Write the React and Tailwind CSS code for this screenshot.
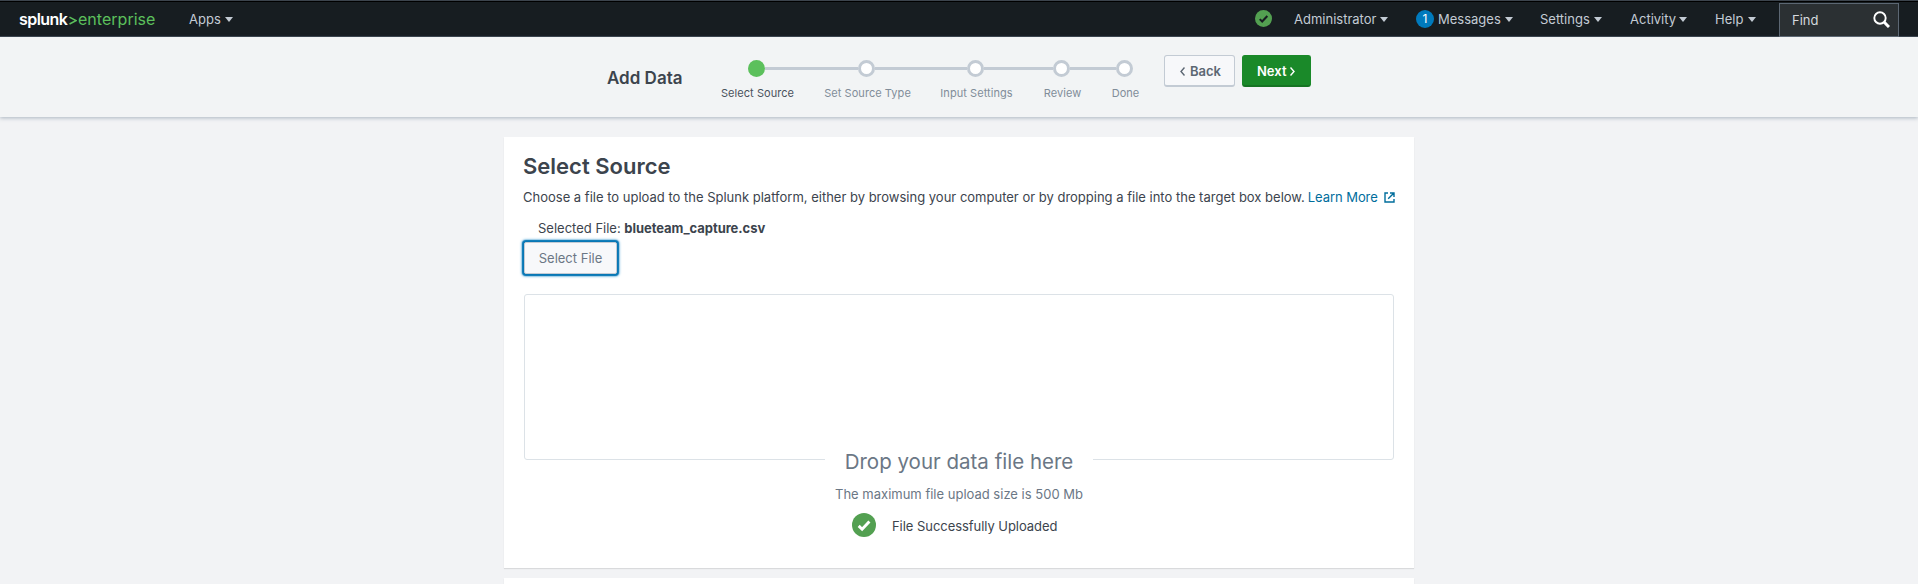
function Caret() {
  return (
    <svg className="mt-[-1px] h-[5px] w-[8px] shrink-0" viewBox="0 0 8 5" fill="currentColor">
      <path d="M0 0h8L4 5z" />
    </svg>
  );
}

function NavItem({ label, className = "" }) {
  return (
    <div className={`flex items-center justify-between pt-[2px] ${className}`}>
      <span>{label}</span>
      <Caret />
    </div>
  );
}

function CheckCircle({ className, check }) {
  return (
    <svg className={`shrink-0 ${className}`} viewBox="0 0 24 24">
      <circle cx="12" cy="12" r="12" fill="#53a051" />
      <path d="M6.7 12.9l3.4 3.3L17.4 8.4" fill="none" stroke={check} strokeWidth="2.9" />
    </svg>
  );
}

function Step({ label, className, active = false }) {
  return (
    <div className={`flex flex-col items-center ${className}`}>
      <div
        className={`size-[17px] rounded-full ${
          active ? "bg-[#5cc05c]" : "border-[3px] border-[#c3cbd4] bg-white"
        }`}
      />
      <div
        className={`mt-[7px] pl-[2px] text-[11px] leading-[18px] tracking-[0.06px] whitespace-nowrap ${
          active ? "text-[#4a525c]" : "text-[#818d99]"
        }`}
      >
        {label}
      </div>
    </div>
  );
}

function Connector({ className }) {
  return <div className={`mt-[7px] h-[3px] shrink-0 bg-[#c3cbd4] ${className}`} />;
}

function TopBar() {
  return (
    <header className="flex h-[37px] border-t border-b border-t-[#3c444d] border-b-[#3c444d] bg-[#171d21] pl-[19px] text-[13px] text-[#c3cbd4] shadow-[inset_0_1px_0_#000]">
      <div className="flex items-center leading-[20px]">
        <span className="w-[50px] text-[16px] font-semibold tracking-[-0.55px] text-white">splunk</span>
        <svg className="mt-[3px] h-[9px] w-[8px]" viewBox="0 0 8 9" fill="none">
          <path d="M0.5 1.2L7 4.6 0.5 8" stroke="#5cc05c" strokeWidth="1.5" />
        </svg>
        <span className="ml-[1px] w-[77px] text-[16px] tracking-[0.02px] text-[#5cc05c]">enterprise</span>
      </div>
      <NavItem label="Apps" className="ml-[34px] w-[44px]" />
      <div className="ml-auto flex items-center">
        <CheckCircle className="mr-[22px] size-[17px]" check="#171d21" />
        <NavItem label="Administrator" className="w-[94px]" />
        <div className="ml-[28px] flex size-[18px] items-center justify-center rounded-full bg-[#007abd] text-[12px] text-white">
          1
        </div>
        <NavItem label="Messages" className="ml-[4px] w-[75px]" />
        <NavItem label="Settings" className="ml-[27px] w-[62px]" />
        <NavItem label="Activity" className="ml-[28px] w-[57px]" />
        <NavItem label="Help" className="ml-[28px] w-[41px]" />
        <div className="mt-[2px] ml-[23px] flex h-[34px] w-[120px] items-center justify-between border border-[#5c6773] bg-[#2b3033] pr-[8px] pl-[12px] text-[#d5dade]">
          <span className="mt-[2px]">Find</span>
          <svg className="size-[17px]" viewBox="0 0 17 17" fill="none" stroke="#fff">
            <circle cx="7" cy="7" r="5.7" strokeWidth="1.9" />
            <path d="M11 11l5 5" strokeWidth="3" />
          </svg>
        </div>
        <div className="w-[19px]" />
      </div>
    </header>
  );
}

function WizardBar() {
  return (
    <div className="flex h-[80px] bg-[#f2f4f5] pl-[607px] shadow-[0_1px_4px_rgba(60,85,110,0.4)]">
      <h1 className="mt-[28px] w-[112px] text-[17px] leading-[26px] font-semibold text-[#3c444d]">Add Data</h1>
      <div className="mt-[23px] flex items-start">
        <Step label="Select Source" className="-mr-[29px] w-[75px]" active />
        <Connector className="w-[93px]" />
        <Step label="Set Source Type" className="-mx-[36px] w-[89px]" />
        <Connector className="w-[92px]" />
        <Step label="Input Settings" className="-mx-[29px] w-[75px]" />
        <Connector className="w-[69px]" />
        <Step label="Review" className="-mx-[13px] w-[43px]" />
        <Connector className="w-[46px]" />
        <Step label="Done" className="-ml-[8px] w-[33px]" />
      </div>
      <div className="mt-[18px] ml-[23px] flex h-[32px] gap-[7px] text-[13px] font-semibold">
        <button className="flex w-[71px] items-center rounded-[3px] border border-b-2 border-[#c3cbd4] bg-[#f7f8fa] pt-[2px] pl-[15px] text-[#5c6773]">
          <svg className="mr-[5px] h-[9px] w-[5px]" viewBox="0 0 5 9" fill="none" stroke="currentColor" strokeWidth="1.4">
            <path d="M4.5 0.5L1 4.5l3.5 4" />
          </svg>
          Back
        </button>
        <button className="flex w-[69px] items-center rounded-[3px] border border-b-2 border-[#1a8929] border-b-[#167423] bg-[#1a8929] pt-[2px] pl-[14px] text-white">
          Next
          <svg className="ml-[4px] h-[9px] w-[5px]" viewBox="0 0 5 9" fill="none" stroke="currentColor" strokeWidth="1.4">
            <path d="M0.5 0.5L4 4.5l-3.5 4" />
          </svg>
        </button>
      </div>
    </div>
  );
}

function SourcePanel() {
  return (
    <main className="mx-auto mt-[20px] h-[431px] w-[910px] bg-white px-[20px] pt-[14px] text-[13px] leading-[20px] text-[#3c444d] shadow-[0_1px_1px_rgba(0,0,0,0.1)]">
      <h2 className="-ml-px text-[22px] leading-[30px] font-semibold">Select Source</h2>
      <p className="mt-[6px] -ml-px flex items-center whitespace-nowrap">
        Choose a file to upload to the Splunk platform, either by browsing your computer or by dropping a file into the
        target box below.
        <a className="ml-[3px] flex items-center tracking-[-0.06px] text-[#006d9c]">
          Learn More
          <svg className="ml-[6px] size-[11px]" viewBox="0 0 11 11" fill="none" stroke="currentColor" strokeWidth="1.4">
            <path d="M4 1H1v9h9V7M6 1h4v4M10 1L4.2 6.8" />
          </svg>
        </a>
      </p>
      <div className="mt-[11px] pl-[14px]">
        Selected File: <b className="font-bold tracking-[-0.05px]">blueteam_capture.csv</b>
      </div>
      <button className="mt-[4px] flex h-[32px] w-[93px] items-center justify-center rounded-[2px] border border-[#c3cbd4] bg-[#f7f8fa] text-[#6b7785] shadow-[0_0_1px_2px_#0877b5,0_0_3px_2px_#3a9ad2]">
        Select File
      </button>
      <div className="mt-[20px] flex h-[166px] items-end justify-center rounded-[3px] border border-[#dce2e7]">
        <div className="-mb-[18px] h-[30px] w-[268px] bg-white text-center text-[20.5px] leading-[30px] whitespace-nowrap text-[#6b7785]">
          Drop your data file here
        </div>
      </div>
      <div className="mt-[24px] text-center text-[#6b7785]">The maximum file upload size is 500 Mb</div>
      <div className="mt-[9px] flex items-center pl-[328px]">
        <CheckCircle className="size-[24px]" check="#fff" />
        <span className="mt-[2px] ml-[16px] tracking-[-0.05px]">File Successfully Uploaded</span>
      </div>
    </main>
  );
}

export default function App() {
  return (
    <div className="h-[584px] overflow-hidden bg-[#f2f3f5] font-['Inter',sans-serif]">
      <TopBar />
      <WizardBar />
      <SourcePanel />
      <section className="mx-auto mt-[10px] h-[40px] w-[910px] bg-white shadow-[0_1px_1px_rgba(0,0,0,0.1)]" />
    </div>
  );
}
